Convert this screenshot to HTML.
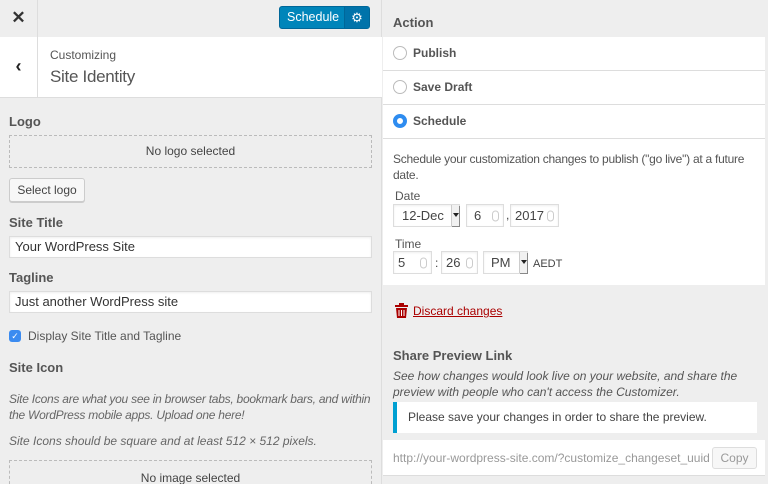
<!DOCTYPE html>
<html style="overflow:hidden;height:484px"><head><style>
*{box-sizing:border-box;margin:0;padding:0}
body{width:768px;height:484px;overflow:hidden;font-family:"Liberation Sans",sans-serif;font-size:12px;color:#444;background:#eee;position:relative}
.a{position:absolute}
.lbl{font-weight:bold;font-size:13px;color:#555}
.inp{background:#fff;border:1px solid #ddd;box-shadow:inset 0 1px 2px rgba(0,0,0,.07)}
.dash{border:1px dashed #bbb}
.sp{position:absolute;right:4px;top:50%;transform:translateY(-50%);width:7px;height:11px;border:1px solid #ccc;border-radius:4px}
.sel{position:absolute;right:0;top:0;bottom:0;width:8px;background:#f1f1f1;border-left:1px solid #ccc;box-shadow:1px 1px 0 #888}
.sel:after{content:"";position:absolute;left:1px;top:8px;border:3px solid transparent;border-top:4px solid #222}
.radio{position:absolute;left:9px;width:14px;height:14px;border-radius:50%;border:1px solid #bbb;background:#fff}
.t{letter-spacing:-.25px}
</style></head><body>
<div class="a" style="left:0;top:0;width:382px;height:484px;background:#eee;border-right:1px solid #ddd"></div>
<div class="a" style="left:0;top:0;width:38px;height:37px;border-right:1px solid #ddd;text-align:center;line-height:36px;font-size:17px;font-weight:bold;color:#333">✕</div>
<div class="a" style="left:279px;top:6px;width:91px;height:23px;background:#0085ba;border:1px solid #006799;border-radius:3px;color:#fff;font-size:12.5px;line-height:21px;padding-left:7px;white-space:nowrap;overflow:hidden">Schedule</div>
<div class="a" style="left:344px;top:7px;width:25px;height:21px;background:#0073aa;border-left:1px solid #006799;color:#fff;text-align:center;line-height:21px;font-size:13px">⚙</div>
<div class="a" style="left:0;top:37px;width:382px;height:61px;background:#fff;border-bottom:1px solid #ddd"></div>
<div class="a" style="left:0;top:37px;width:38px;height:61px;border-right:1px solid #ddd;text-align:center;line-height:58px;font-size:18px;font-weight:bold;color:#222">‹</div>
<div class="a" style="left:50px;top:48px;color:#555;font-size:12px">Customizing</div>
<div class="a" style="left:50px;top:67px;color:#555;font-size:17px;letter-spacing:-.3px">Site Identity</div>
<div class="a lbl" style="left:9px;top:114px">Logo</div>
<div class="a dash" style="left:9px;top:135px;width:363px;height:33px;text-align:center;line-height:31px">No logo selected</div>
<div class="a" style="left:9px;top:178px;width:76px;height:24px;background:#f7f7f7;border:1px solid #ccc;border-radius:3px;box-shadow:0 1px 0 #ccc;text-align:center;line-height:22px">Select logo</div>
<div class="a lbl" style="left:9px;top:215px">Site Title</div>
<div class="a inp" style="left:9px;top:236px;width:363px;height:22px;padding-left:5px;line-height:20px;font-size:13px;color:#333">Your WordPress Site</div>
<div class="a lbl" style="left:9px;top:270px">Tagline</div>
<div class="a inp" style="left:9px;top:291px;width:363px;height:22px;padding-left:5px;line-height:20px;font-size:13px;color:#333">Just another WordPress site</div>
<div class="a" style="left:9px;top:330px;width:12px;height:12px;background:#3b8bf0;border-radius:3px;color:#fff;font-size:9px;text-align:center;line-height:12px">✓</div>
<div class="a" style="left:28px;top:329px;color:#555">Display Site Title and Tagline</div>
<div class="a lbl" style="left:9px;top:360px">Site Icon</div>
<div class="a t" style="left:9px;top:391px;font-style:italic;color:#666;line-height:16px;width:372px">Site Icons are what you see in browser tabs, bookmark bars, and within the WordPress mobile apps. Upload one here!</div>
<div class="a" style="left:9px;top:434px;font-style:italic;color:#666">Site Icons should be square and at least 512 × 512 pixels.</div>
<div class="a dash" style="left:9px;top:460px;width:363px;height:40px;text-align:center;line-height:34px">No image selected</div>
<div class="a" style="left:383px;top:0;width:385px;height:484px;background:#eee"></div>
<div class="a lbl" style="left:393px;top:15px">Action</div>
<div class="a" style="left:383px;top:37px;width:382px;height:248px;background:#fff"></div>
<div class="a" style="left:383px;top:70px;width:382px;height:1px;background:#ddd"></div>
<div class="a" style="left:383px;top:104px;width:382px;height:1px;background:#ddd"></div>
<div class="a" style="left:383px;top:138px;width:382px;height:1px;background:#ddd"></div>
<div class="radio" style="left:393px;top:46px"></div>
<div class="a" style="left:413px;top:46px;font-weight:bold;color:#555">Publish</div>
<div class="radio" style="left:393px;top:80px"></div>
<div class="a" style="left:413px;top:80px;font-weight:bold;color:#555">Save Draft</div>
<div class="radio" style="left:393px;top:114px;border:4px solid #2e8cf0;background:#fff"></div>
<div class="a" style="left:413px;top:114px;font-weight:bold;color:#555">Schedule</div>
<div class="a t" style="left:393px;top:151px;width:372px;line-height:16px;color:#555">Schedule your customization changes to publish ("go live") at a future date.</div>
<div class="a" style="left:395px;top:189px;color:#555">Date</div>
<div class="a inp" style="left:393px;top:204px;width:67px;height:23px;padding-left:8px;line-height:21px;font-size:13px">12-Dec<span class="sel"></span></div>
<div class="a inp" style="left:466px;top:204px;width:38px;height:23px;padding-left:7px;line-height:21px;font-size:13px">6<span class="sp"></span></div>
<div class="a" style="left:506px;top:208px">,</div>
<div class="a inp" style="left:510px;top:204px;width:49px;height:23px;padding-left:4px;line-height:21px;font-size:13px">2017<span class="sp"></span></div>
<div class="a" style="left:395px;top:237px;color:#555">Time</div>
<div class="a inp" style="left:393px;top:251px;width:39px;height:23px;padding-left:4px;line-height:21px;font-size:13px">5<span class="sp"></span></div>
<div class="a" style="left:435px;top:256px">:</div>
<div class="a inp" style="left:441px;top:251px;width:37px;height:23px;padding-left:4px;line-height:21px;font-size:13px">26<span class="sp"></span></div>
<div class="a inp" style="left:483px;top:251px;width:45px;height:23px;padding-left:7px;line-height:21px;font-size:13px">PM<span class="sel"></span></div>
<div class="a" style="left:533px;top:258px;font-size:11px">AEDT</div>
<svg class="a" style="left:395px;top:303px" width="13" height="15" viewBox="0 0 13 15"><rect x="0" y="2" width="13" height="2" fill="#a00"/><rect x="4" y="0" width="5" height="3" fill="#a00"/><path d="M1 5h11l-1 10H2z" fill="#a00"/><path d="M4 7v6M6.5 7v6M9 7v6" stroke="#fff" stroke-width="1"/></svg>
<div class="a" style="left:413px;top:304px;color:#a00;text-decoration:underline">Discard changes</div>
<div class="a lbl" style="left:393px;top:348px">Share Preview Link</div>
<div class="a" style="left:393px;top:368px;font-style:italic;color:#555;line-height:16px;width:380px;white-space:nowrap">See how changes would look live on your website, and share the<br>preview with people who can't access the Customizer.</div>
<div class="a" style="left:393px;top:402px;width:364px;height:31px;background:#fff;border-left:4px solid #00a0d2;padding-left:11px;line-height:31px;color:#444">Please save your changes in order to share the preview.</div>
<div class="a" style="left:383px;top:440px;width:382px;height:36px;background:#fff;border-bottom:1px solid #ddd"></div>
<div class="a" style="left:393px;top:451px;color:#999;font-size:12px;white-space:nowrap;width:316px;overflow:hidden">http://your-wordpress-site.com/?customize_changeset_uuid</div>
<div class="a" style="left:712px;top:447px;width:45px;height:22px;background:#f7f7f7;border:1px solid #ddd;border-radius:3px;text-align:center;line-height:20px;color:#999">Copy</div>
</body></html>
